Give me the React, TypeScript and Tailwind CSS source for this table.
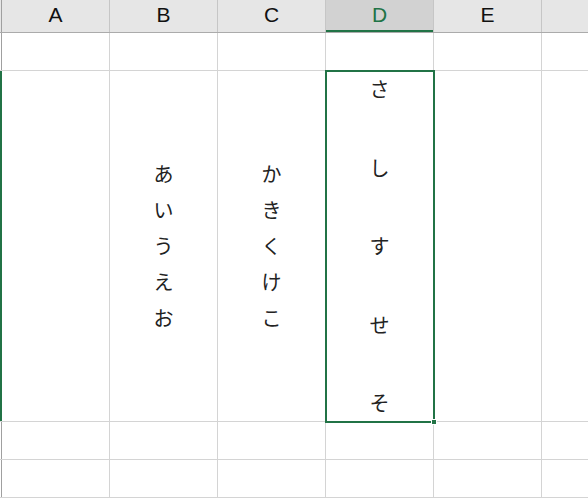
const jp = "font-['Noto_Sans_CJK_JP','Noto_Sans',sans-serif]";

const cols = ['A', 'B', 'C', 'D', 'E', ''];

function HeaderRow() {
  return (
    <div className="flex h-[33px] border-b border-[#ababab] bg-[#e6e6e6] font-['Liberation_Sans',Arial,sans-serif]">
      <div className="w-[2px] shrink-0 border-r border-[#a0a0a0]" />
      {cols.map((c, i) => {
        const active = c === 'D';
        return (
          <div
            key={i}
            className={
              'relative flex shrink-0 items-center justify-center pb-[2px] text-[21px] ' +
              (i < 5 ? 'w-[108px] border-r border-[#c6c6c6] ' : 'flex-1 ') +
              (active ? 'bg-[#d2d2d2] text-[#217346]' : 'text-[#111]')
            }
          >
            {c}
            {active && <div className="absolute bottom-0 left-0 right-0 h-[2px] bg-[#217346]" />}
          </div>
        );
      })}
    </div>
  );
}

function Row({ h, edge, children }: { h: string; edge?: boolean; children?: (i: number) => React.ReactNode }) {
  return (
    <div className={'flex shrink-0 border-b border-[#d4d4d4] ' + h}>
      <div className={'w-[2px] shrink-0 ' + (edge ? 'bg-[#217346]' : 'border-r border-[#a0a0a0]')} />
      {cols.map((_, i) => (
        <div
          key={i}
          className={'relative shrink-0 ' + (i < 5 ? 'w-[108px] border-r border-[#d4d4d4]' : 'flex-1')}
        >
          {children ? children(i) : null}
        </div>
      ))}
    </div>
  );
}

function Stack({ text }: { text: string }) {
  return (
    <div className={'flex h-full flex-col items-center justify-center text-[20px] leading-[36px] text-[#222] ' + jp}>
      {text.split('').map((ch) => (
        <span key={ch}>{ch}</span>
      ))}
    </div>
  );
}

export default function App() {
  return (
    <div className="h-[498px] w-[588px] overflow-hidden bg-white">
      <HeaderRow />
      <Row h="h-[38px]" />
      <Row h="h-[351px]" edge>
        {(i) => {
          if (i === 1) return <Stack text="あいうえお" />;
          if (i === 2) return <Stack text="かきくけこ" />;
          if (i === 3)
            return (
              <>
                <div
                  className={
                    'flex h-full flex-col items-center justify-between pt-[6px] pb-[6px] text-[20px] leading-[24px] text-[#222] ' +
                    jp
                  }
                >
                  {'さしすせそ'.split('').map((ch) => (
                    <span key={ch}>{ch}</span>
                  ))}
                </div>
                <div className="absolute left-[-1px] top-[-1px] z-10 h-[353px] w-[110px] border-2 border-[#217346]" />
                <div className="absolute left-[105px] top-[348px] z-20 h-[6px] w-[6px] border border-white bg-[#217346]" />
              </>
            );
          return null;
        }}
      </Row>
      <Row h="h-[38px]" />
      <Row h="h-[38px]" />
    </div>
  );
}
